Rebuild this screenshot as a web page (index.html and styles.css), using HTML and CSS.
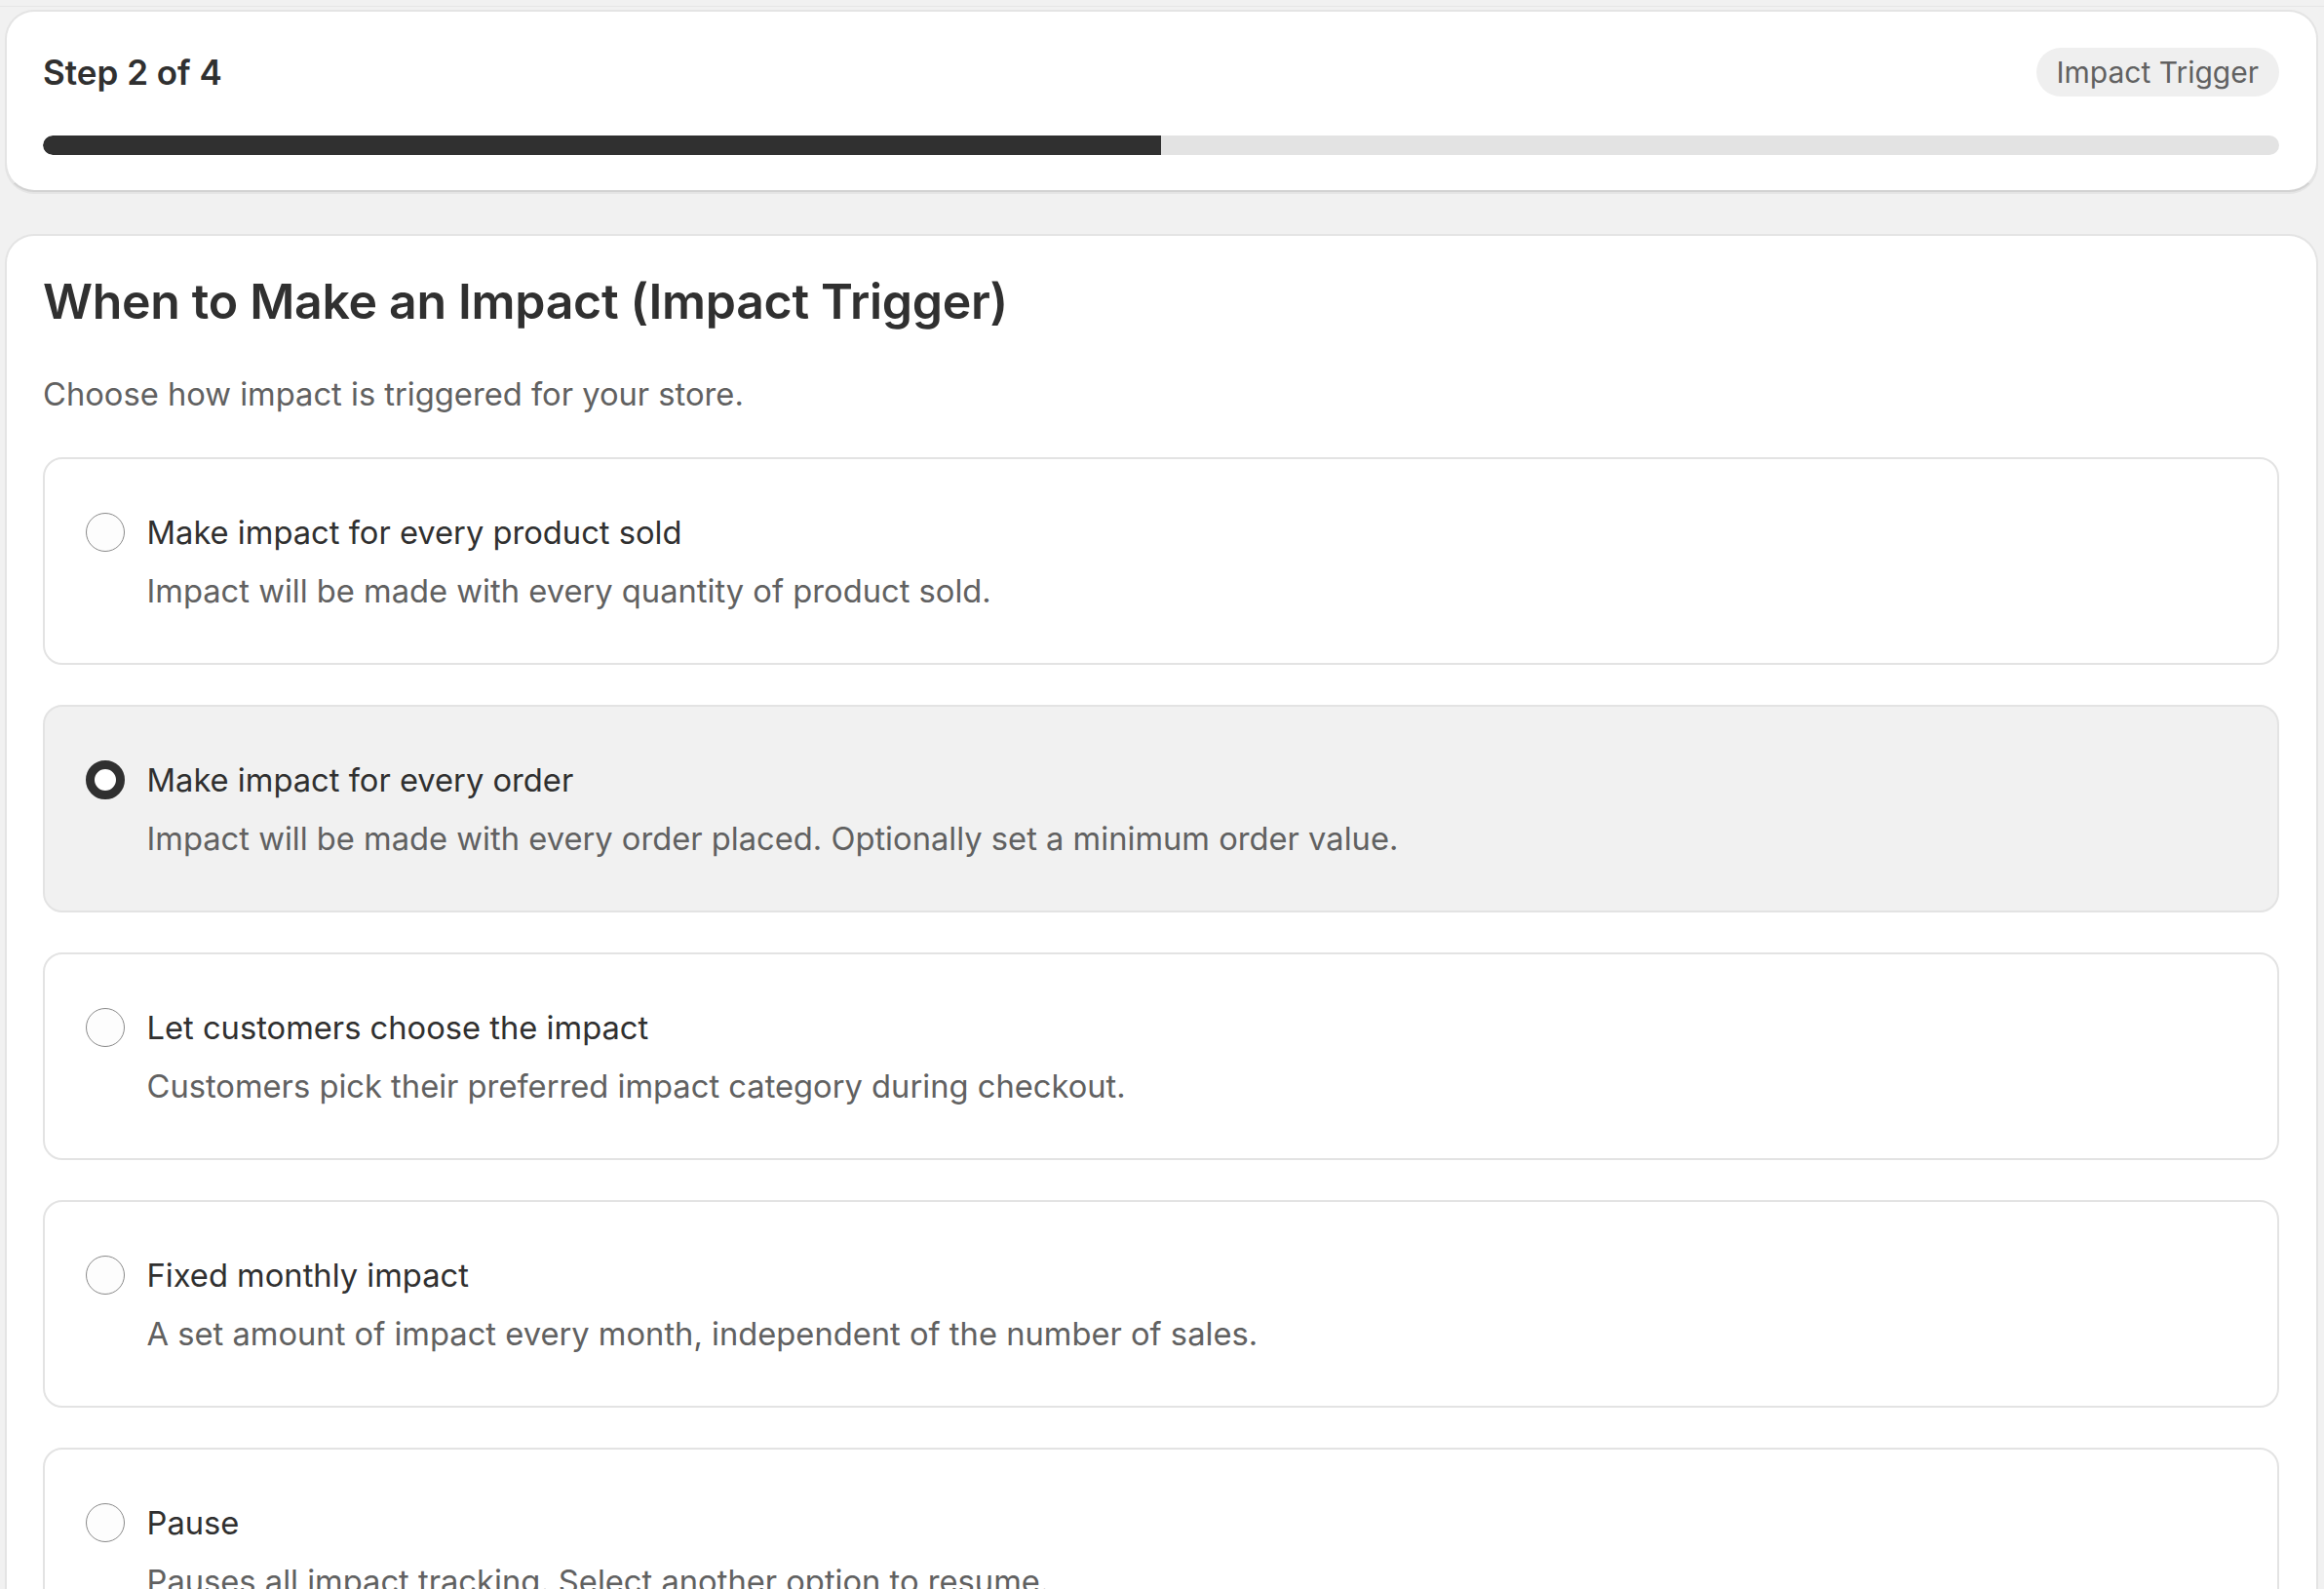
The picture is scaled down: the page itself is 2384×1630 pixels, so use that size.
FILE: index.html
```html
<!DOCTYPE html>
<html lang="en">
<head>
<meta charset="utf-8">
<title>Impact Trigger</title>
<link rel="stylesheet" href="styles.css">
</head>
<body>
<div class="page">
  <section class="card step-card">
    <div class="step-head">
      <h2 class="step-title">Step 2 of 4</h2>
      <span class="badge">Impact Trigger</span>
    </div>
    <div class="progress"><div class="progress-fill" style="width:50%"></div></div>
  </section>

  <section class="card main-card">
    <h1 class="main-title">When to Make an Impact (Impact Trigger)</h1>
    <p class="main-sub">Choose how impact is triggered for your store.</p>

    <div class="options">
      <label class="option">
        <span class="radio"></span>
        <span class="option-text">
          <span class="option-title">Make impact for every product sold</span>
          <span class="option-desc">Impact will be made with every quantity of product sold.</span>
        </span>
      </label>
      <label class="option option-selected">
        <span class="radio radio-on"></span>
        <span class="option-text">
          <span class="option-title">Make impact for every order</span>
          <span class="option-desc">Impact will be made with every order placed. Optionally set a minimum order value.</span>
        </span>
      </label>
      <label class="option">
        <span class="radio"></span>
        <span class="option-text">
          <span class="option-title">Let customers choose the impact</span>
          <span class="option-desc">Customers pick their preferred impact category during checkout.</span>
        </span>
      </label>
      <label class="option">
        <span class="radio"></span>
        <span class="option-text">
          <span class="option-title">Fixed monthly impact</span>
          <span class="option-desc">A set amount of impact every month, independent of the number of sales.</span>
        </span>
      </label>
      <label class="option">
        <span class="radio"></span>
        <span class="option-text">
          <span class="option-title">Pause</span>
          <span class="option-desc">Pauses all impact tracking. Select another option to resume.</span>
        </span>
      </label>
    </div>
  </section>
</div>
</body>
</html>
```

FILE: styles.css
```css
* { box-sizing: border-box; }

html, body {
  margin: 0;
  padding: 0;
  background: #f1f1f1;
}

body {
  font-family: Inter, "Noto Sans", "Liberation Sans", sans-serif;
  color: #303030;
  border-top: 1px solid #e6e6e6;
  margin-top: 6px;
}

.page {
  padding: 3px 6px 40px 5px;
  display: flex;
  flex-direction: column;
  gap: 43px;
}

.card {
  background: #ffffff;
  border: 2px solid #e4e4e4;
  border-bottom-color: #d2d2d2;
  border-radius: 30px;
  box-shadow: 0 2px 0 rgba(26, 26, 26, 0.05);
}

.step-card {
  padding: 37px 38px 36px 37px;
  display: flex;
  flex-direction: column;
  gap: 40px;
}

.step-head {
  display: flex;
  align-items: center;
  justify-content: space-between;
  height: 50px;
}

.step-title {
  margin: 0;
  font-size: 35px;
  font-weight: 600;
  line-height: 50px;
  color: #303030;
}

.badge {
  display: inline-flex;
  align-items: center;
  height: 50px;
  padding: 0 21px 0 20px;
  border-radius: 25px;
  background: #efefef;
  color: #616161;
  font-size: 30px;
  line-height: 50px;
}

.progress {
  height: 20px;
  border-radius: 10px;
  background: #e3e3e3;
  overflow: hidden;
}

.progress-fill {
  height: 100%;
  background: #303030;
  border-radius: 10px 0 0 10px;
}

.main-card {
  padding: 37px 38px 40px 37px;
  display: flex;
  flex-direction: column;
  gap: 40px;
}

.main-title {
  margin: 0;
  font-size: 50px;
  font-weight: 600;
  line-height: 60px;
  letter-spacing: -0.3px;
  color: #303030;
}

.main-sub {
  margin: 0;
  font-size: 32.7px;
  line-height: 50px;
  color: #616161;
}

.options {
  display: flex;
  flex-direction: column;
  gap: 41px;
}

.option {
  display: flex;
  align-items: flex-start;
  gap: 22.5px;
  padding: 50px 42px 49px 42px;
  border: 2px solid #e3e3e3;
  border-radius: 20px;
  background: #ffffff;
}

.option-selected {
  background: #f1f1f1;
}

.radio {
  flex: none;
  width: 40px;
  height: 40px;
  margin-top: 5px;
  border-radius: 50%;
  border: 1.5px solid #8a8a8a;
  background: #fdfdfd;
}

.radio-on {
  border: 9px solid #303030;
  background: #ffffff;
}

.option-text {
  display: flex;
  flex-direction: column;
  gap: 10px;
}

.option-title {
  font-size: 32.7px;
  line-height: 50px;
  color: #303030;
}

.option-desc {
  font-size: 32.7px;
  line-height: 50px;
  color: #616161;
}
```
